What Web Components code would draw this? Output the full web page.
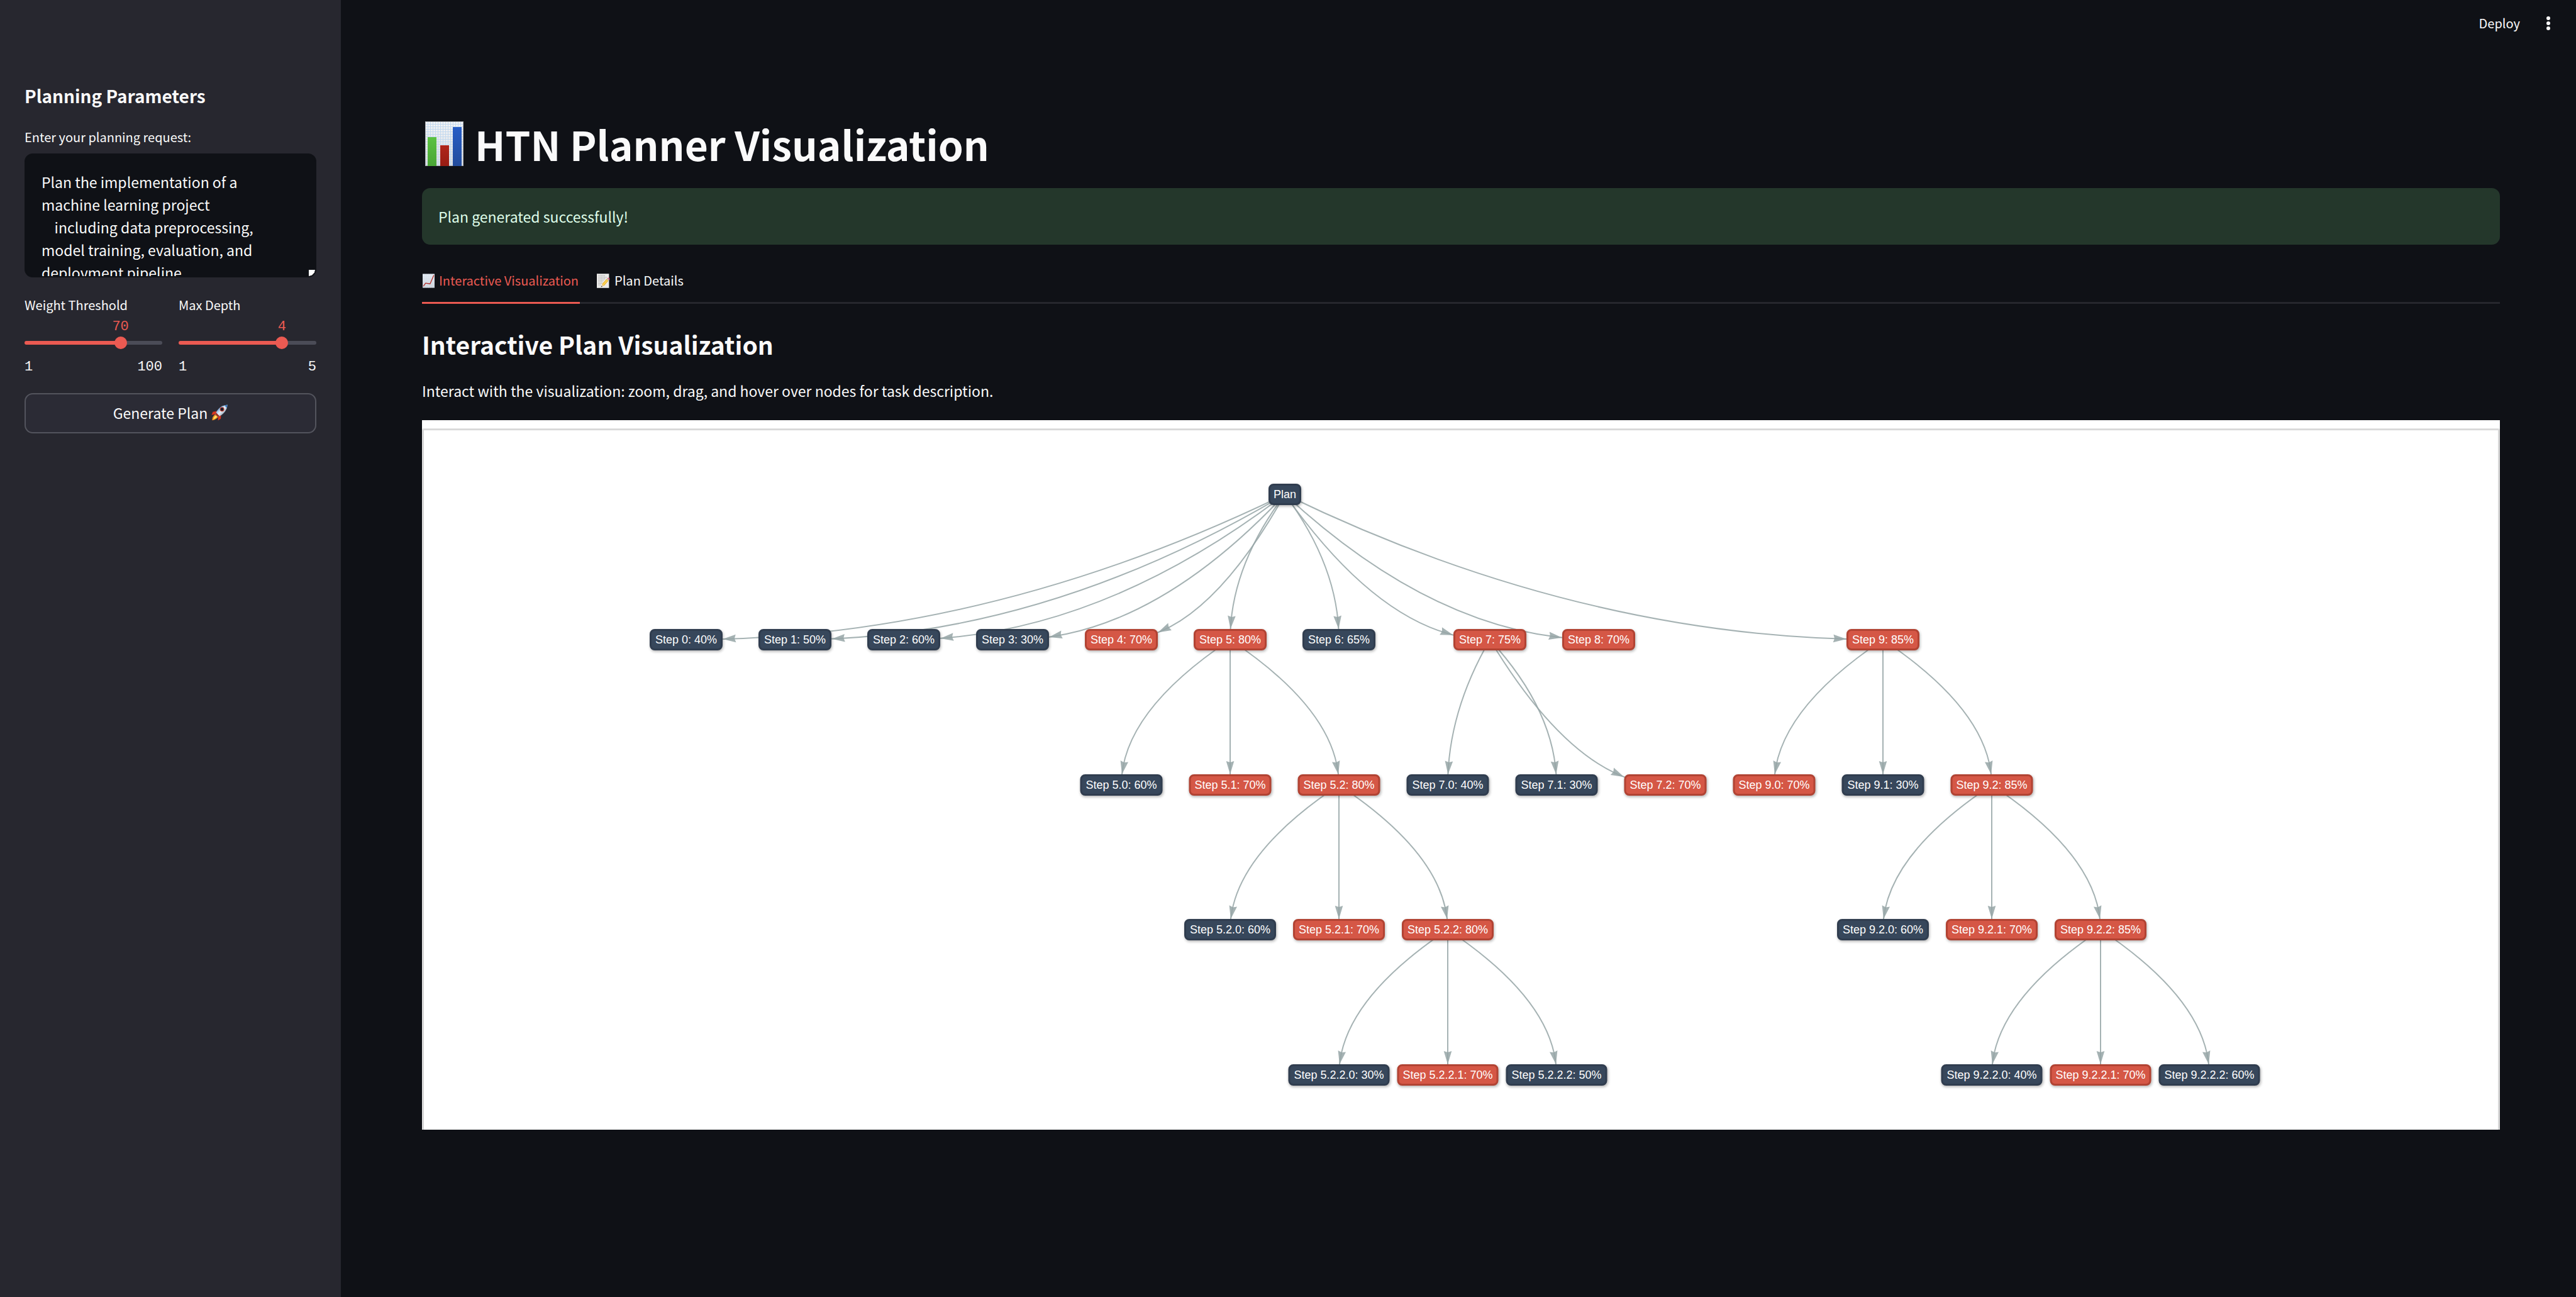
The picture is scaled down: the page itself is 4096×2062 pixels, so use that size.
<!DOCTYPE html>
<html lang="en">
<head>
<meta charset="utf-8">
<title>HTN Planner Visualization</title>
<style>
:root{
  --bg:#0f1116; --panel:#27272f; --accent:#eb5a52; --text:#fafafa; --line:#26272d;
  --mono:"Liberation Mono",monospace;
}
html,body{margin:0;height:100%;background:var(--bg)}
body{color:var(--text);font-family:"Noto Sans CJK JP","Noto Sans CJK SC","Noto Sans",sans-serif;font-size:23px;line-height:36px}
</style>
</head>
<body>
<app-shell>
  <side-panel slot="sidebar" heading="Planning Parameters">
    <text-field label="Enter your planning request:" value="Plan the implementation of a machine learning project&#10;    including data preprocessing, model training, evaluation, and deployment pipeline"></text-field>
    <slider-row>
      <range-slider label="Weight Threshold" min="1" max="100" value="70"></range-slider>
      <range-slider label="Max Depth" min="1" max="5" value="4"></range-slider>
    </slider-row>
    <action-button icon="rocket">Generate Plan</action-button>
  </side-panel>
  <top-bar slot="header"></top-bar>
  <page-title icon="bars">HTN Planner Visualization</page-title>
  <status-alert>Plan generated successfully!</status-alert>
  <tab-view></tab-view>
</app-shell>

<script>
const ICONS = {
  bars: `<svg viewBox="0 0 61 71" style="width:61px;height:71px">
    <defs><linearGradient id="p" x1="0" y1="0" x2="0" y2="1"><stop offset="0" stop-color="#f4f5f7"/><stop offset="1" stop-color="#dcdcde"/></linearGradient>
    <linearGradient id="g" x1="0" y1="0" x2="0" y2="1"><stop offset="0" stop-color="#5bc242"/><stop offset="1" stop-color="#4aa535"/></linearGradient>
    <linearGradient id="r" x1="0" y1="0" x2="0" y2="1"><stop offset="0" stop-color="#b0251b"/><stop offset="1" stop-color="#971c13"/></linearGradient>
    <linearGradient id="b" x1="0" y1="0" x2="0" y2="1"><stop offset="0" stop-color="#275dc6"/><stop offset="1" stop-color="#234c9c"/></linearGradient>
    <pattern id="q" width="4" height="4" patternUnits="userSpaceOnUse"><path d="M0 .5H4M.5 0V4" stroke="#c3d9ef" stroke-width="1" fill="none"/></pattern></defs>
    <rect width="61" height="71" fill="url(#p)"/><rect width="61" height="71" fill="url(#q)"/>
    <rect x=".5" y=".5" width="60" height="70" fill="none" stroke="#a9adb3"/>
    <rect x="4" y="25" width="14" height="46" fill="url(#g)"/><rect x="24" y="38" width="14" height="33" fill="url(#r)"/><rect x="44" y="9" width="14" height="62" fill="url(#b)"/></svg>`,
  chart: `<svg viewBox="0 0 24 28" style="width:19px;height:23px">
    <defs><linearGradient id="c" x1="0" y1="0" x2="0" y2="1"><stop offset="0" stop-color="#e4ecf4"/><stop offset="1" stop-color="#ccd4dc"/></linearGradient></defs>
    <rect width="24" height="28" fill="url(#c)"/><path d="M4 0V28M8 0V28M12 0V28M16 0V28M20 0V28M0 5H24M0 10H24M0 15H24M0 20H24M0 25H24" stroke="#d3deea" stroke-width=".5"/>
    <path d="M1.5 25L6 18.5L15 20L22.5 2.5" fill="none" stroke="#b5322c" stroke-width="1.7" stroke-linejoin="round"/></svg>`,
  memo: `<svg viewBox="0 0 26 28" style="width:21px;height:23px">
    <rect width="24" height="28" fill="#ebebe9"/>
    <path d="M3 4H16M3 7H20M3 10H17M3 13H14M3 16H12M3 19H10M3 22H8" stroke="#9c9c9c" stroke-width="1" stroke-dasharray="2.5 .8 1.5 .6"/>
    <path d="M8.500 26L10.500 20.500L13.800 23.800Z" fill="#e6c99a"/><path d="M8 26.500L9.200 23.800L11 25.600Z" fill="#333"/>
    <path d="M10.200 20.200L19.200 10.200L23 13.800L14 24Z" fill="#f1b92e"/><path d="M11.500 21.300L20.500 11.400L21.800 12.600L12.800 22.700Z" fill="#fbdc6a"/>
    <path d="M19.200 10.200L20.600 8.700L24.400 12.300L23 13.800Z" fill="#b9bcc0"/><path d="M20.600 8.700Q22.500 7 24.500 8.800Q26.200 10.600 24.400 12.300Z" fill="#e2687a"/></svg>`,
  rocket: `<svg viewBox="0 0 32 32" style="width:26px;height:26px">
    <defs><linearGradient id="k" x1="0" y1="0" x2="1" y2="1"><stop offset=".25" stop-color="#5d9bd6"/><stop offset=".5" stop-color="#e9f1f8"/><stop offset=".8" stop-color="#7f93a8"/></linearGradient></defs>
    <path d="M11 13L3 14.500L.5 20.500L8 19Z" fill="#d8361f"/><path d="M19 21L18.500 28L13 31.500L13.500 24Z" fill="#d8361f"/>
    <path d="M7.500 19.500Q2 23 1.500 31Q9 30 13.500 24.500Z" fill="#f08a1c"/><path d="M8 21.500Q4.500 24.500 3.500 29.500Q8.500 28 11.500 24Z" fill="#ffe465"/>
    <path d="M8 19C11 10 18 2 31.500 .5C31 11 24 19.500 13 24.500Z" fill="url(#k)"/><path d="M26 1.800Q29 .8 31.500 .5Q31.300 4 30 7Z" fill="#3a78bd"/>
    <path d="M8 19L9.500 16L16 22.800L13 24.500Z" fill="#9c2c22"/>
    <circle cx="21" cy="9.500" r="4.300" fill="#c43a2c"/><circle cx="21" cy="9.500" r="2.900" fill="#17202c"/></svg>`
};

const define = (name, html, setup) => customElements.define(name, class extends HTMLElement {
  constructor(){
    super();
    const t = document.createElement('template');
    t.innerHTML = html;
    this.attachShadow({mode:'open'}).append(t.content.cloneNode(true));
  }
  connectedCallback(){ if(setup && !this.ready){ this.ready = true; setup(this, this.shadowRoot); } }
});

define('emoji-icon', `<style>:host{display:inline-flex;flex:none}svg{display:block}</style>`, (el, root) => {
  root.innerHTML += ICONS[el.getAttribute('name')];
});

define('app-shell', `<style>
  :host{display:flex;min-height:100vh}
  aside{flex:0 0 542px;box-sizing:border-box;background:var(--panel);padding:133px 39px 0}
  main{flex:1;min-width:0}
  section{display:flex;flex-direction:column;padding:89px 121px 120px 129px}
</style><aside><slot name="sidebar"></slot></aside><main><slot name="header"></slot><section><slot></slot></section></main>`);

define('top-bar', `<style>
  :host{display:flex;justify-content:flex-end;align-items:flex-start;gap:32px;height:97px;box-sizing:border-box;padding:22px 31px 0}
  button{all:unset;font-size:20px;line-height:30px}
  .more{width:26px;height:30px;display:flex;justify-content:center}
  svg{width:8px;height:30px}
</style><button>Deploy</button><button class="more" aria-label="Main menu"><svg viewBox="0 0 8 30" fill="#fafafa"><circle cx="4" cy="7" r="3"/><circle cx="4" cy="15" r="3"/><circle cx="4" cy="23" r="3"/></svg></button>`);

define('side-panel', `<style>
  :host{display:flex;flex-direction:column;gap:29px}
  h2{margin:0 0 3px;font-size:28px;line-height:38px;font-weight:700}
</style><h2></h2><slot></slot>`, (el, root) => {
  root.querySelector('h2').textContent = el.getAttribute('heading');
});

define('text-field', `<style>
  :host{display:flex;flex-direction:column;gap:11px}
  label{font-size:20px;line-height:30px}
  div{position:relative;display:flex}
  textarea{flex:1;box-sizing:border-box;height:197px;margin:0;border:2px solid var(--bg);border-radius:13px;background:var(--bg);color:inherit;
    font:inherit;font-size:23px;line-height:36px;padding:25px 50px 0 25px;resize:none;overflow:hidden;outline:0}
  div::after{content:"";position:absolute;right:2px;bottom:2px;width:10px;height:10px;background:#fff;clip-path:polygon(0 0,100% 0,88% 45%,50% 85%,0 100%)}
</style><label for="t"></label><div><textarea id="t" spellcheck="false"></textarea></div>`, (el, root) => {
  root.querySelector('label').textContent = el.getAttribute('label');
  root.querySelector('textarea').value = el.getAttribute('value');
});

define('slider-row', `<style>:host{display:grid;grid-template-columns:1fr 1fr;gap:26px}</style><slot></slot>`);

define('range-slider', `<style>
  :host{display:flex;flex-direction:column}
  label{font-size:20px;line-height:30px;margin-bottom:8px;white-space:nowrap}
  output,.ends{font-family:var(--mono);font-size:22px;line-height:24px}
  output{color:var(--accent);width:60px;margin-left:calc(var(--at) - 30px);text-align:center}
  .bar{display:grid;align-items:center;height:20px;margin:3px 0 17px}
  .bar>*{grid-area:1/1}
  .track{height:6px;border-radius:3px;background:linear-gradient(to right,var(--accent) var(--at),#4b4c57 var(--at))}
  input{appearance:none;-webkit-appearance:none;background:none;margin:0 -10px;height:20px;width:calc(100% + 20px)}
  input::-webkit-slider-runnable-track{height:20px;background:none}
  input::-webkit-slider-thumb{-webkit-appearance:none;width:20px;height:20px;border-radius:50%;background:var(--accent);border:0}
  .ends{display:flex;justify-content:space-between}
</style><label for="r"></label><output for="r"></output>
<div class="bar"><div class="track"></div><input id="r" type="range"></div>
<div class="ends"><span></span><span></span></div>`, (el, root) => {
  const min = +el.getAttribute('min'), max = +el.getAttribute('max');
  const input = root.querySelector('input'), ends = root.querySelectorAll('.ends span');
  root.querySelector('label').textContent = el.getAttribute('label');
  ends[0].textContent = min; ends[1].textContent = max;
  input.min = min; input.max = max; input.value = el.getAttribute('value');
  const sync = () => {
    el.style.setProperty('--at', (input.value - min) / (max - min) * 100 + '%');
    root.querySelector('output').textContent = input.value;
  };
  input.addEventListener('input', sync); sync();
});

define('action-button', `<style>
  :host{display:flex}
  button{flex:1;display:flex;justify-content:center;align-items:center;gap:6px;height:64px;box-sizing:border-box;border:2px solid #53545d;border-radius:13px;
    background:#2b2b35;color:inherit;font:inherit;padding:0 0 2px}
</style><button><slot></slot><emoji-icon></emoji-icon></button>`, (el, root) => {
  const i = document.createElement('emoji-icon'); i.setAttribute('name', el.getAttribute('icon'));
  root.querySelector('emoji-icon').replaceWith(i);
});

define('page-title', `<style>
  :host{display:block}
  h1{margin:0;display:flex;align-items:center;gap:18px;padding-left:5px;font-size:64px;line-height:84px;font-weight:700}
</style><h1><emoji-icon name="bars"></emoji-icon><span><slot></slot></span></h1>`);

define('status-alert', `<style>
  :host{display:block;margin-top:29px;padding:26px;border-radius:13px;background:#24372b;color:#dffde9;line-height:38px}
</style><div role="alert"><slot></slot></div>`);

define('tab-view', `<style>
  :host{display:flex;flex-direction:column;margin-top:26px}
  nav{display:flex;gap:26px;border-bottom:3px solid var(--line)}
  button{all:unset;display:flex;align-items:center;gap:7px;padding:16px 2px 19px 1px;margin-bottom:-3px;border-bottom:3px solid transparent;font-size:20px;line-height:30px}
  button[aria-selected=true]{color:var(--accent);border-color:var(--accent)}
  h2{margin:37px 0 29px;font-size:39px;line-height:54px;font-weight:700}
  p{margin:0 0 29px}
</style>
<nav role="tablist"><button role="tab" aria-selected="true"><emoji-icon name="chart"></emoji-icon>Interactive Visualization</button><button role="tab" aria-selected="false"><emoji-icon name="memo"></emoji-icon>Plan Details</button></nav>
<h2>Interactive Plan Visualization</h2>
<p>Interact with the visualization: zoom, drag, and hover over nodes for task description.</p>
<plan-graph></plan-graph>`);

define('graph-node', `<style>
  :host{position:absolute;box-sizing:border-box;height:34px;display:flex;align-items:center;justify-content:center;transform:translate(-50%,-50%);
    border:3px solid #303d4f;border-radius:8px;background:#37475b;color:#fff;font:18px/20px "Liberation Sans",Arial,sans-serif;white-space:nowrap;box-shadow:1px 2px 4px rgba(0,0,0,.3)}
  :host([hot]){background:#d55746;border-color:#b24333}
</style><slot></slot>`);

/* id, column, parent; columns are one node spacing apart */
const TREE = [
  ['Plan', 5.5, null],
  ['0', 0, 'Plan', 40], ['1', 1, 'Plan', 50], ['2', 2, 'Plan', 60], ['3', 3, 'Plan', 30], ['4', 4, 'Plan', 70],
  ['5', 5, 'Plan', 80], ['6', 6, 'Plan', 65], ['7', 7.386, 'Plan', 75], ['8', 8.386, 'Plan', 70], ['9', 11, 'Plan', 85],
  ['5.0', 4, '5', 60], ['5.1', 5, '5', 70], ['5.2', 6, '5', 80],
  ['7.0', 7, '7', 40], ['7.1', 8, '7', 30], ['7.2', 9, '7', 70],
  ['9.0', 10, '9', 70], ['9.1', 11, '9', 30], ['9.2', 12, '9', 85],
  ['5.2.0', 5, '5.2', 60], ['5.2.1', 6, '5.2', 70], ['5.2.2', 7, '5.2', 80],
  ['9.2.0', 11, '9.2', 60], ['9.2.1', 12, '9.2', 70], ['9.2.2', 13, '9.2', 85],
  ['5.2.2.0', 6, '5.2.2', 30], ['5.2.2.1', 7, '5.2.2', 70], ['5.2.2.2', 8, '5.2.2', 50],
  ['9.2.2.0', 12, '9.2.2', 40], ['9.2.2.1', 13, '9.2.2', 70], ['9.2.2.2', 14, '9.2.2', 60]
];

define('plan-graph', `<style>
  :host{display:block;box-sizing:border-box;height:1128px;padding-top:13px;background:#fff;overflow:hidden}
  .card{border:2px solid #dfdfdf;border-radius:3px}
  .canvas{position:relative;height:1200px;border:1px solid #d0d0d0}
  svg{position:absolute;inset:0;width:100%;height:100%}
  path{fill:none;stroke:#95a5a6;stroke-width:2;opacity:.85}
  polygon{fill:#95a5a6;opacity:.85}
</style><div class="card"><div class="canvas"><svg></svg></div></div>`, (el, root) => {
  const canvas = root.querySelector('.canvas'), svg = root.querySelector('svg'), nodes = {};
  const ROWS = [102, 333, 564, 794, 1025], X0 = 417, STEP = 173, H = 17;
  for (const [id, col, parent, pct] of TREE) {
    const level = parent ? id.split('.').length : 0;
    const n = nodes[id] = {x: Math.round(X0 + col * STEP), y: ROWS[level], w: level ? 101 + 15 * level : 52};
    const box = document.createElement('graph-node');
    box.textContent = parent ? `Step ${id}: ${pct}%` : id;
    if (pct >= 70) box.setAttribute('hot', '');
    box.style.cssText = `left:${n.x}px;top:${n.y}px;width:${n.w}px`;
    canvas.append(box);
    if (!parent) continue;
    const a = nodes[parent], dx = n.x - a.x, dy = n.y - a.y;
    const v = Math.abs(dx) <= Math.abs(dy) ? {x: n.x, y: a.y + dy / 2} : {x: a.x + dx / 2, y: n.y};
    const at = t => ({x: (1-t)**2*a.x + 2*t*(1-t)*v.x + t*t*n.x, y: (1-t)**2*a.y + 2*t*(1-t)*v.y + t*t*n.y});
    let t = 1, p = at(1);
    while (t > 0 && Math.abs(p.x - n.x) < n.w / 2 && Math.abs(p.y - n.y) < H) p = at(t -= .001);
    const g = at(t - .1), ang = Math.atan2(p.y - g.y, p.x - g.x), L = 21;
    const pt = (u, w) => `${(p.x + L*(u*Math.cos(ang) - w*Math.sin(ang))).toFixed(1)},${(p.y + L*(u*Math.sin(ang) + w*Math.cos(ang))).toFixed(1)}`;
    svg.innerHTML += `<path d="M${a.x} ${a.y}Q${v.x} ${v.y} ${n.x} ${n.y}"/><polygon points="${pt(0,0)} ${pt(-1,.3)} ${pt(-.9,0)} ${pt(-1,-.3)}"/>`;
  }
});
</script>
</body>
</html>
